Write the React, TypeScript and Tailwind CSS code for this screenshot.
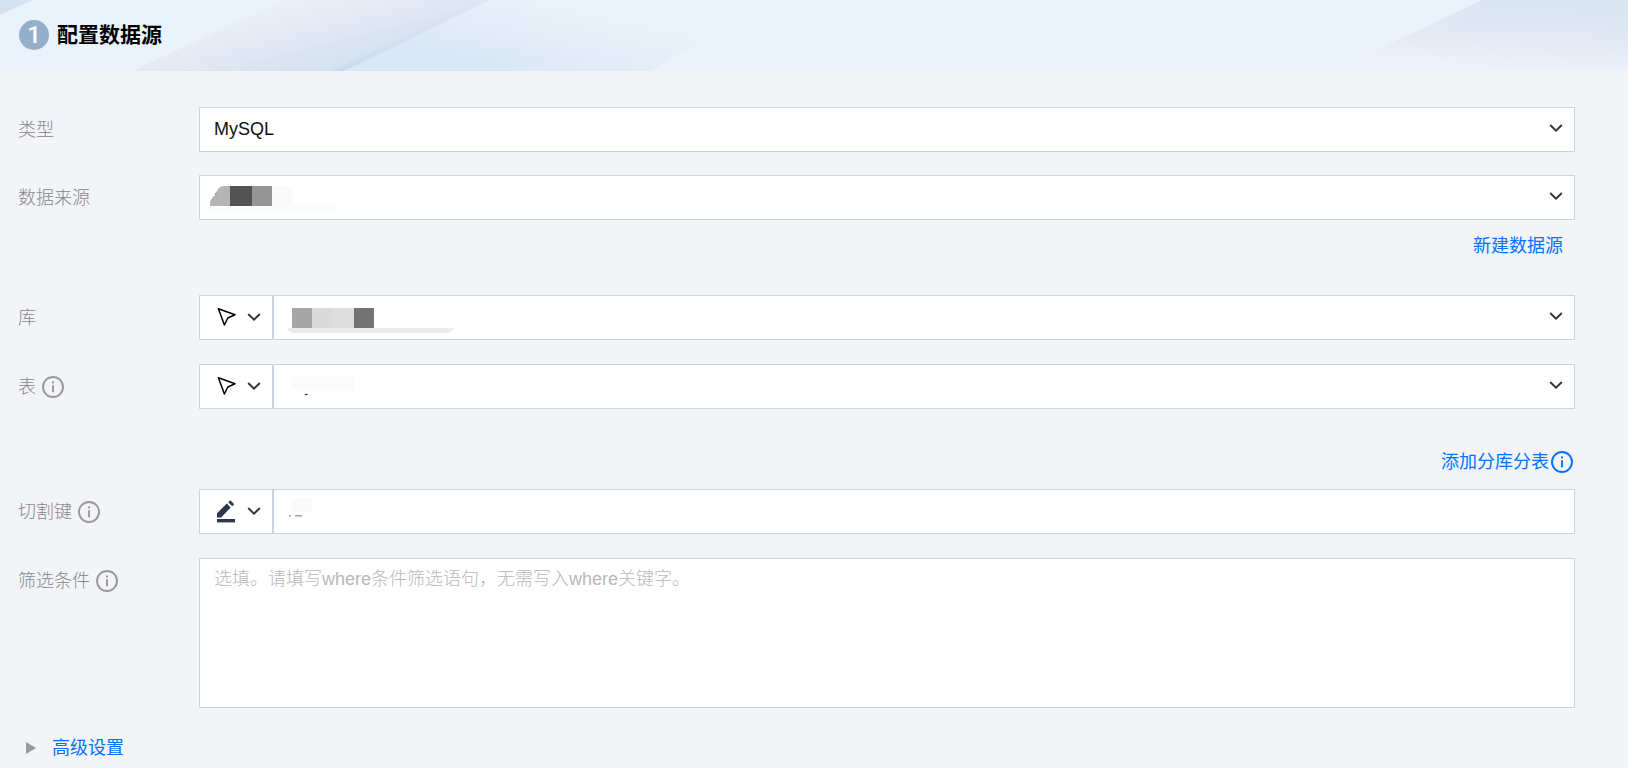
import React from 'react';

interface IconProps {
  className?: string;
}

const InfoIcon: React.FC<IconProps> = ({ className = '' }) => (
  <svg viewBox="0 0 22 22" fill="none" className={`h-[22px] w-[22px] shrink-0 ${className}`} aria-hidden="true">
    <circle cx="11" cy="11" r="10" stroke="currentColor" strokeWidth="1.9" />
    <circle cx="11" cy="6.4" r="1.1" fill="currentColor" />
    <path d="M11 9.3V16.2" stroke="currentColor" strokeWidth="1.9" />
  </svg>
);

const ChevronIcon: React.FC<IconProps> = ({ className = '' }) => (
  <svg viewBox="0 0 14 8" fill="none" className={`pointer-events-none h-2 w-[14px] ${className}`} aria-hidden="true">
    <path d="M1.2 1L7 6.6L12.8 1" stroke="#333" strokeWidth="1.9" />
  </svg>
);

const CursorIcon: React.FC = () => (
  <svg viewBox="0 0 20 20" fill="none" className="h-5 w-5" aria-hidden="true">
    <path d="M1.4 1.8L18 7.8L10.8 11L7.4 18Z" stroke="#000" strokeWidth="1.5" strokeLinejoin="round" />
  </svg>
);

const PencilIcon: React.FC = () => (
  <svg viewBox="0 0 20 24" fill="#2f3650" className="h-6 w-5" aria-hidden="true">
    <path d="M0 18.5V14.2L9.8 4.6L13.7 8.5L4.1 18.5Z" />
    <path d="M11.2 3.3L13.4 1.3L17.2 5.2L15.2 7.2Z" />
    <path d="M0 20H18V23.4H0Z" />
  </svg>
);

interface FormRowProps {
  label: string;
  htmlFor: string;
  info?: boolean;
  children: React.ReactNode;
}

const FormRow: React.FC<FormRowProps> = ({ label, htmlFor, info, children }) => (
  <div className="flex items-start">
    <label htmlFor={htmlFor} className="flex h-[46px] w-[181px] shrink-0 items-center gap-[6px] font-light text-[#888]">
      {label}
      {info && <InfoIcon className="text-[#999]" />}
    </label>
    <div className="flex min-w-0 flex-1">{children}</div>
  </div>
);

interface SelectFieldProps {
  id: string;
  value?: string;
  children?: React.ReactNode;
}

const SelectField: React.FC<SelectFieldProps> = ({ id, value = '', children }) => (
  <div className="relative min-w-0 flex-1">
    <select
      id={id}
      defaultValue={value}
      className="block h-[45px] w-full appearance-none rounded-none border border-[#cdd3de] bg-white px-[14px] pb-[2px] text-[#111] outline-none"
    >
      <option value={value}>{value}</option>
    </select>
    {children}
    <ChevronIcon className="absolute top-[17px] right-3" />
  </div>
);

interface ModeSelectProps {
  label: string;
  icon: React.ReactNode;
}

const ModeSelect: React.FC<ModeSelectProps> = ({ label, icon }) => (
  <div className="relative w-[74px] shrink-0">
    <select
      aria-label={label}
      className="block h-[45px] w-full appearance-none rounded-none border border-[#cdd3de] bg-white outline-none"
    >
      <option value="default" />
    </select>
    <span className="pointer-events-none absolute inset-0 flex items-center gap-[10px] pb-[2px] pl-[18px]">
      {icon}
      <ChevronIcon />
    </span>
  </div>
);

// Masked values
const SourceMask = () => (
  <svg viewBox="0 0 130 28" className="pointer-events-none absolute top-[11px] left-[11px] h-7 w-[130px]" aria-hidden="true">
    <path d="M0 20H128Q126 26 118 26H8Q1 26 0 20Z" fill="#fcfcfe" />
    <path d="M0 20V16Q1 12 5 9Q8 0 14 0H20V20Z" fill="#b5b5b5" />
    <path d="M20 0H42V20H20Z" fill="#535353" />
    <path d="M42 0H62V20H42Z" fill="#949494" />
    <path d="M62 0H82V20H62Z" fill="#fafafa" />
    <path d="M5 7H6.5V8.5H5Z" fill="#888" />
  </svg>
);

const DatabaseMask = () => (
  <svg viewBox="0 0 168 26" className="pointer-events-none absolute top-[13px] left-[14px] h-[26px] w-[168px]" aria-hidden="true">
    <path d="M0 20H167Q165 25 159 25H8Q2 25 0 20Z" fill="#ebebf0" />
    <path d="M5 0H167V20H5Z" fill="#fff" />
    <path d="M5 0H25V20H5Z" fill="#a6a6a6" />
    <path d="M25 0H45V20H25Z" fill="#dadada" />
    <path d="M45 0H67V20H45Z" fill="#dedede" />
    <path d="M67 0H87V20H67Z" fill="#737373" />
  </svg>
);

const TableMask = () => (
  <svg viewBox="0 0 62 20" className="pointer-events-none absolute top-[12px] left-[19px] h-5 w-[62px]" aria-hidden="true">
    <path d="M0 0H62V13H0Z" fill="#fbfbfb" />
    <path d="M13 18H16L15 19H13Z" fill="#444" stroke="#444" strokeWidth="0.3" />
  </svg>
);

const KeyMask = () => (
  <svg viewBox="0 0 26 20" className="pointer-events-none absolute top-[9px] left-[16px] h-5 w-[26px]" aria-hidden="true">
    <path d="M3 0H23V14H3Z" fill="#fafafa" />
    <path d="M0 17.4H2V18.2H0ZM6 17.4H13V18.2H6Z" fill="#444" />
  </svg>
);

const HeaderArt = () => (
  <svg viewBox="0 0 1628 71" preserveAspectRatio="none" className="absolute inset-0 h-full w-full" aria-hidden="true">
    <defs>
      <linearGradient id="bandLeft" gradientUnits="userSpaceOnUse" x1="250" y1="0" x2="270" y2="80">
        <stop offset="0" stopColor="#eaf2fc" />
        <stop offset="0.5" stopColor="#e3eaf5" />
        <stop offset="0.7" stopColor="#dee7f2" />
        <stop offset="1" stopColor="#d5e2f1" />
      </linearGradient>
      <linearGradient id="bandMiddle" gradientUnits="userSpaceOnUse" x1="560" y1="0" x2="545" y2="71">
        <stop offset="0" stopColor="#eaf2fc" />
        <stop offset="0.5" stopColor="#e4eef8" />
        <stop offset="1" stopColor="#dbe8f6" />
      </linearGradient>
      <linearGradient id="bandFade" x1="0" y1="0" x2="1" y2="0">
        <stop offset="0.4" stopColor="#e9f1fb" stopOpacity="0" />
        <stop offset="1" stopColor="#e9f1fb" stopOpacity="0.5" />
      </linearGradient>
      <linearGradient id="bandRight" gradientUnits="userSpaceOnUse" x1="1560" y1="0" x2="1556" y2="71">
        <stop offset="0" stopColor="#d8e5f2" />
        <stop offset="0.35" stopColor="#dee8f3" />
        <stop offset="0.6" stopColor="#e3eaf5" />
        <stop offset="1" stopColor="#ebf2fb" />
      </linearGradient>
      <linearGradient id="edge" x1="1" y1="0" x2="0" y2="1">
        <stop offset="0" stopColor="#dfe8f3" />
        <stop offset="1" stopColor="#cbdaee" />
      </linearGradient>
    </defs>
    <path d="M0 0H33L0 15Z" fill="#d5e2f2" />
    <path d="M283 0H488L332 71H132Z" fill="url(#bandLeft)" />
    <path d="M488 0H770L651 71H345Z" fill="url(#bandMiddle)" />
    <path d="M488 0H770L651 71H345Z" fill="url(#bandFade)" />
    <path d="M482 0H490L345 71H331Z" fill="url(#edge)" />
    <path d="M1482 0H1628V71H1333Z" fill="url(#bandRight)" />
  </svg>
);

const App: React.FC = () => {
  return (
    <div className="min-h-screen bg-[#f2f4f8] font-['Liberation_Sans','Noto_Sans_CJK_SC',sans-serif] text-[18px] leading-6">
      <header className="relative h-[71px] bg-[#eaf2fc]">
        <HeaderArt />
        <div className="relative flex h-[70px] items-center gap-2 pl-[19px]">
          <span className="flex h-[30px] w-[30px] items-center justify-center rounded-full bg-[#95aeca] font-[Roboto,sans-serif] text-[24px] font-medium text-white">
            1
          </span>
          <h1 className="text-[21px] font-bold text-black">配置数据源</h1>
        </div>
      </header>

      <form className="pt-9 pr-[53px] pl-[18px]">
        <FormRow label="类型" htmlFor="type">
          <SelectField id="type" value="MySQL" />
        </FormRow>

        <div className="mt-[22px]">
          <FormRow label="数据来源" htmlFor="source">
            <SelectField id="source">
              <SourceMask />
            </SelectField>
          </FormRow>
        </div>
        <div className="flex h-[74px] justify-end pt-[13px] pr-3">
          <a href="#new-source" className="text-[#0073ff]">新建数据源</a>
        </div>

        <FormRow label="库" htmlFor="database">
          <ModeSelect label="库选择方式" icon={<CursorIcon />} />
          <SelectField id="database">
            <DatabaseMask />
          </SelectField>
        </FormRow>

        <div className="mt-[23px]">
          <FormRow label="表" htmlFor="table" info>
            <ModeSelect label="表选择方式" icon={<CursorIcon />} />
            <SelectField id="table">
              <TableMask />
            </SelectField>
          </FormRow>
        </div>
        <div className="flex h-[79px] justify-end pt-10 pr-[2px]">
          <a href="#sharding" className="flex h-6 items-center gap-[2px] text-[#0073ff]">
            添加分库分表
            <InfoIcon />
          </a>
        </div>

        <FormRow label="切割键" htmlFor="split-key" info>
          <ModeSelect label="切割键输入方式" icon={<PencilIcon />} />
          <div className="relative min-w-0 flex-1">
            <input
              id="split-key"
              type="text"
              className="block h-[45px] w-full border border-[#cdd3de] bg-white px-[14px] outline-none"
            />
            <KeyMask />
          </div>
        </FormRow>

        <div className="mt-[23px]">
          <FormRow label="筛选条件" htmlFor="filter" info>
            <textarea
              id="filter"
              placeholder="选填。请填写where条件筛选语句，无需写入where关键字。"
              className="block h-[150px] w-full resize-none border border-[#cdd3de] bg-white px-[14px] py-2 font-light outline-none placeholder:text-[#b8b8b8]"
            />
          </FormRow>
        </div>

        <button type="button" className="mt-7 flex items-center gap-4 pl-[8px] text-[#0073ff]">
          <svg viewBox="0 0 10 12" className="h-3 w-[10px]" aria-hidden="true">
            <path d="M0 0L10 6L0 12Z" fill="#999" />
          </svg>
          高级设置
        </button>
      </form>
    </div>
  );
};

export default App;
